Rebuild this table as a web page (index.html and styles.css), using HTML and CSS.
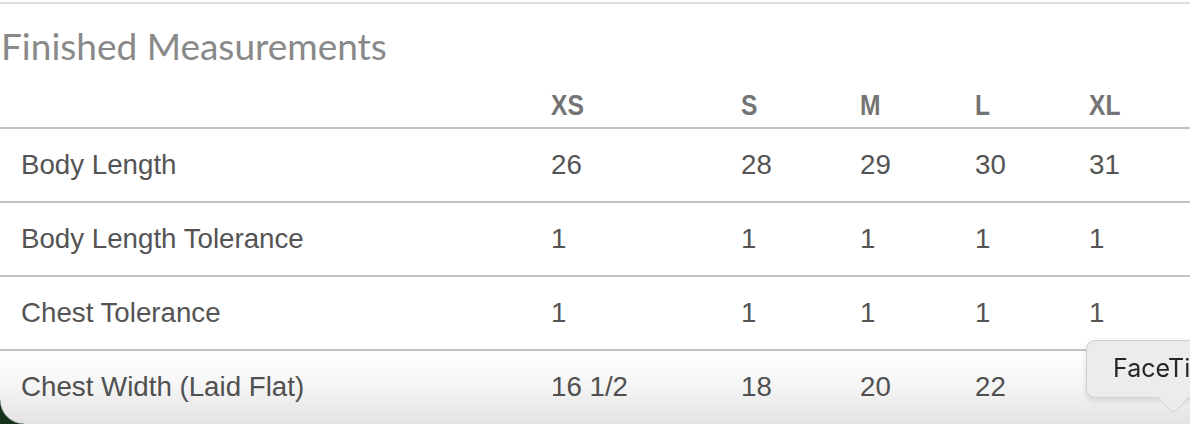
FILE: index.html
```html
<!DOCTYPE html>
<html lang="en">
<head>
<meta charset="utf-8">
<title>Finished Measurements</title>
<link rel="stylesheet" href="styles.css">
</head>
<body>
<div class="page">
  <div class="top-rule"></div>
  <h2 class="title">Finished Measurements</h2>
  <table class="sizes">
    <colgroup>
      <col class="c-label">
      <col class="c-xs">
      <col class="c-s">
      <col class="c-m">
      <col class="c-l">
      <col class="c-xl">
    </colgroup>
    <thead>
      <tr>
        <th></th>
        <th><span class="hd">XS</span></th>
        <th><span class="hd">S</span></th>
        <th><span class="hd">M</span></th>
        <th><span class="hd">L</span></th>
        <th><span class="hd">XL</span></th>
      </tr>
    </thead>
    <tbody>
      <tr><td>Body Length</td><td>26</td><td>28</td><td>29</td><td>30</td><td>31</td></tr>
      <tr><td>Body Length Tolerance</td><td>1</td><td>1</td><td>1</td><td>1</td><td>1</td></tr>
      <tr><td>Chest Tolerance</td><td>1</td><td>1</td><td>1</td><td>1</td><td>1</td></tr>
      <tr><td>Chest Width (Laid Flat)</td><td>16 1/2</td><td>18</td><td>20</td><td>22</td><td>24</td></tr>
    </tbody>
  </table>
</div>
<div class="bottom-shade"></div>
<div class="desk-corner"></div>
<div class="tooltip">
  <span class="tooltip-text">FaceTime</span>
  <span class="tooltip-arrow"></span>
</div>
</body>
</html>
```

FILE: styles.css
```css
html, body {
  margin: 0;
  padding: 0;
  background: #ffffff;
  width: 1190px;
  height: 424px;
  overflow: hidden;
}

.page {
  position: relative;
  width: 1190px;
}

.top-rule {
  height: 2px;
  margin-top: 2px;
  background: #dedede;
}

.title {
  margin: 19px 0 0 1px;
  font-family: Lato, "Open Sans", sans-serif;
  font-weight: 400;
  font-size: 37px;
  line-height: 46px;
  color: #898989;
  letter-spacing: 0;
}

.sizes {
  width: 1190px;
  border-collapse: collapse;
  table-layout: fixed;
  font-family: "Liberation Sans", Arial, sans-serif;
}

.c-label { width: 551px; }
.c-xs { width: 190px; }
.c-s { width: 119px; }
.c-m { width: 115px; }
.c-l { width: 114px; }
.c-xl { width: 101px; }

.sizes th {
  height: 51px;
  padding: 0 0 7px 0;
  vertical-align: bottom;
  text-align: left;
  font-size: 30px;
  line-height: 30px;
  font-weight: 700;
  color: #747474;
  border-bottom: 2px solid #c2c2c2;
}

.hd {
  display: inline-block;
  transform: scaleX(0.82);
  transform-origin: left center;
}

.sizes td {
  height: 72px;
  padding: 0;
  vertical-align: middle;
  text-align: left;
  font-size: 27.7px;
  line-height: 30px;
  color: #545454;
  border-bottom: 2px solid #c2c2c2;
}

.sizes td:first-child {
  padding-left: 21px;
}

.sizes tbody tr:last-child td {
  border-bottom: none;
}

.bottom-shade {
  position: fixed;
  left: 0;
  right: 0;
  bottom: 0;
  height: 72px;
  background: linear-gradient(to bottom, rgba(0,0,0,0) 0%, rgba(0,0,0,0.03) 40%, rgba(0,0,0,0.11) 100%);
  pointer-events: none;
}

.desk-corner {
  position: fixed;
  left: 0;
  bottom: 0;
  width: 24px;
  height: 24px;
  background: radial-gradient(circle 24px at 24px 0, rgba(0,0,0,0) 23px, #16321a 24.5px);
}

.tooltip {
  position: fixed;
  left: 1086px;
  top: 340px;
  width: 150px;
  height: 58px;
  box-sizing: border-box;
  background: #ececec;
  border: 1px solid #cfcfcf;
  border-radius: 9px;
  box-shadow: 0 2px 6px rgba(0,0,0,0.12);
  font-family: Inter, "Liberation Sans", sans-serif;
  font-size: 25px;
  line-height: 54px;
  color: #262626;
}

.tooltip-text {
  display: block;
  padding-left: 26px;
  white-space: nowrap;
}

.tooltip-arrow {
  position: absolute;
  left: 75px;
  bottom: -12px;
  width: 22px;
  height: 22px;
  background: #ececec;
  border-right: 1px solid #cfcfcf;
  border-bottom: 1px solid #cfcfcf;
  transform: rotate(45deg);
  border-bottom-right-radius: 4px;
}
```
